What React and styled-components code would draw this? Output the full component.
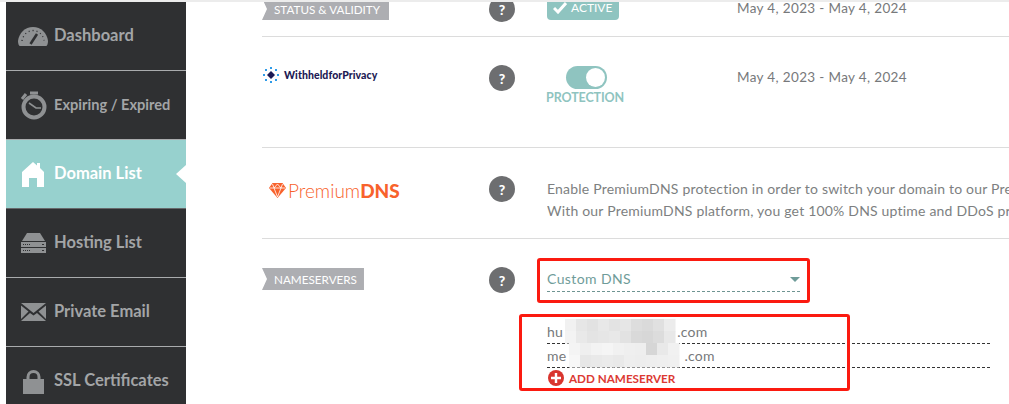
import React from "react";
import styled, { createGlobalStyle } from "styled-components";

const Global = createGlobalStyle`
  html, body { margin: 0; padding: 0; height: 404px; overflow: hidden; background: #fff; }
  body { font-family: Lato, "Open Sans", sans-serif; }
`;
const Page = styled.div`
  width: 1009px; height: 404px; overflow: hidden; display: flex; box-sizing: border-box;
  border-top: 2px solid #ececec; padding-left: 6px;
`;
const Sidebar = styled.nav`
  width: 180px; flex: none; background: #2f3032; display: flex; flex-direction: column;
`;
const NavItem = styled.div`
  height: 69px; flex: none; box-sizing: border-box; display: flex; align-items: center; position: relative;
  background: ${p => p.$active ? "#97d1ce" : "transparent"};
  color: ${p => p.$active ? "#fff" : "#a3a5a7"};
  border-bottom: 1px solid ${p => p.$active ? "#66696b" : "#a9abad"};
`;
const NavIcon = styled.span`
  width: 48px; display: flex; justify-content: center; flex: none; padding-left: 6px; box-sizing: border-box;
`;
const NavLabel = styled.span`
  font-size: ${p => p.$size || 16.5}px; font-weight: 700; white-space: nowrap;
  padding-bottom: ${p => p.$nudge ?? 2}px;
`;
const Notch = styled.span`
  position: absolute; right: 0; top: 50%; margin-top: -9px; width: 0; height: 0;
  border-style: solid; border-width: 9px 10px 9px 0; border-color: transparent #fff transparent transparent;
`;
const Main = styled.main`
  margin-left: 76px; flex: 1; min-width: 0; display: flex; flex-direction: column; overflow: hidden;
`;
const Row = styled.section`
  height: ${p => p.$h}px; flex: none; box-sizing: border-box; position: relative;
  display: grid; grid-template-columns: 227px 58px 190px 1fr; align-content: start; align-items: start;
  padding-top: ${p => p.$top}px;
  border-bottom: ${p => p.$last ? "0" : "1px solid #dcdcdc"};
`;
const Tag = styled.div`
  justify-self: start; height: 22px; margin-top: ${p => p.$mt}px; background: #adaeb2; color: #fff; font-size: 11.7px;
  display: flex; align-items: center; padding: 0 ${p => p.$pr}px ${p => p.$pb || 0}px 12px; box-sizing: border-box;
  clip-path: polygon(0 0, 100% 0, 100% 100%, 0 100%, 5px 50%);
  white-space: nowrap; line-height: 12px;
`;
const Help = styled.div`
  width: 26px; height: 26px; border-radius: 50%; background: #6d6e70; color: #fff; margin-top: ${p => p.$mt || 0}px;
  font-weight: 900; font-size: 14px; display: flex; align-items: center; justify-content: center;
`;
const Status = styled.div`
  justify-self: start; height: 18px; width: 72px; background: #8fc4c0; border-radius: 0 0 4px 4px; color: #fff;
  font-size: 12px; line-height: 12px; display: flex; align-items: center; gap: 4px; padding: 0 0 6px 6px; box-sizing: border-box;
`;
const DateText = styled.div`
  font-size: 13.5px; line-height: 12px; color: #77797b; letter-spacing: .35px; white-space: nowrap; margin-top: ${p => p.$mt || 0}px;
`;
const Brand = styled.div`
  display: flex; align-items: center; gap: 4px; color: #1d1a55; font-size: 10.5px; font-weight: 900; white-space: nowrap;
  letter-spacing: .06px; margin-top: 1px;
`;
const Toggle = styled.div`
  width: 41px; height: 23px; border-radius: 12px; background: #8fc4c0; position: relative; margin: 1px 0 0 19px;
`;
const Knob = styled.span`
  position: absolute; right: 2px; top: 2px; width: 19px; height: 19px; border-radius: 50%; background: #fff;
`;
const ProtectCol = styled.div`
  display: flex; flex-direction: column; align-items: flex-start;
`;
const Protect = styled.div`
  font-size: 12.5px; font-weight: 700; color: #8fc4c0; margin-top: 1px; margin-left: -1px; letter-spacing: -.1px;
`;
const Premium = styled.div`
  display: flex; align-items: center; gap: 2px; color: #f8622c; font-size: 19px; font-weight: 300; white-space: nowrap; margin: 3px 0 0 7px;
  b { font-weight: 900; }
`;
const Description = styled.div`
  grid-column: 3 / 5; font-size: 14px; line-height: 21.5px; color: #7d7f81; white-space: nowrap; letter-spacing: .2px;
  overflow: hidden; margin-top: 2px;
`;
const NsColumn = styled.div`
  grid-column: 3 / 5; display: flex; flex-direction: column;
`;
const SelectMark = styled.div`
  width: 273px; height: 45px; margin: -9px 0 0 -10px; border: 3px solid #fb1a10; border-radius: 3px;
  box-sizing: border-box; padding: 6px 7px 0 7px;
`;
const Select = styled.div`
  height: 25px; box-sizing: border-box; border-bottom: 1px dashed #6f9592; display: flex; align-items: center;
  justify-content: space-between; color: #6f9c99; font-size: 14px; letter-spacing: .4px; padding-bottom: 1px;
`;
const Caret = styled.span`
  width: 0; height: 0; border-style: solid; border-width: 5px 5.5px 0; border-color: #6f9c99 transparent transparent; margin-top: 1px;
`;
const NsList = styled.div`
  position: relative; width: 443px; margin-top: 17px;
`;
const NsField = styled.div`
  height: 24px; box-sizing: border-box; border-bottom: 1px dashed #333; color: #77797b; font-size: 14px;
  letter-spacing: .25px; display: flex; align-items: center; white-space: nowrap;
`;
const Gap = styled.span`
  display: inline-block; width: ${p => p.$w}px;
`;
const Smudge = styled.svg`
  position: absolute; left: 10px; top: -1px; width: 125px; height: 50px;
`;
const Annot = styled.div`
  position: absolute; left: -28px; top: -6px; width: 331px; height: 77px; box-sizing: border-box;
  border: 3px solid #fb1a10; border-radius: 3px; pointer-events: none;
`;
const Add = styled.div`
  display: flex; align-items: center; gap: 5px; color: #dc3a33; font-size: 11.7px; font-weight: 700; margin: 2px 0 0 1px;
`;

const Gauge = () => (
  <svg width="30" height="21" viewBox="0 0 30 21"><path fill="#8f9193" fillRule="evenodd" d="M15 1C7 1 1 7 0 15c0 3 1 5 2 5h26c1 0 2-2 2-5C29 7 23 1 15 1z"/>
    <path stroke="#2f3032" strokeWidth="1.3" strokeDasharray="1 3" fill="none" d="M4 15C5 9 9 5 15 4.500c6 .5 10 4 11 10"/>
    <path stroke="#2f3032" strokeWidth="2.600" fill="none" d="M12.500 18 19 8"/></svg>
);
const Timer = () => (
  <svg width="28" height="29" viewBox="0 0 28 29"><circle cx="15" cy="16" r="10.500" fill="none" stroke="#8f9193" strokeWidth="4"/>
    <path stroke="#8f9193" strokeWidth="3" d="M3 8l4-5M11 2h8"/><path stroke="#8f9193" strokeWidth="1.600" d="M10 12l7 5h5" fill="none"/></svg>
);
const Home = () => (
  <svg width="22" height="25" viewBox="0 0 22 25"><path fill="#fff" d="M11 0l4 3.500V1h3v5l4 4v15h-7v-9H7v9H0V10z"/></svg>
);
const Server = () => (
  <svg width="27" height="21" viewBox="0 0 27 21"><path fill="#8f9193" d="M7 0h13l5 8H2zM1 9h25v5H1zM1 15h25v5H1z"/>
    <path stroke="#2f3032" strokeWidth="1" strokeDasharray="1 1" d="M3 11.500h8M3 17.500h8"/><path stroke="#2f3032" d="M22 11.500h2M22 17.500h2"/></svg>
);
const Mail = () => (
  <svg width="25" height="18" viewBox="0 0 25 18"><path fill="#8f9193" d="M0 0l12.500 10L25 0zM0 2.500V16l7.500-7.500zM25 2.500V16l-7.500-7.500zM0 18l9-8 3.500 2.500L16 10l9 8z"/></svg>
);
const Lock = () => (
  <svg width="21" height="25" viewBox="0 0 21 25"><path fill="none" stroke="#8f9193" strokeWidth="3" d="M5 11V8a5.500 5.500 0 0 1 11 0v3"/><path fill="#8f9193" d="M0 10h21v15H0z"/></svg>
);
const Check = () => (
  <svg width="14" height="12" viewBox="0 0 14 12"><path fill="none" stroke="#fff" strokeWidth="3" d="M1 6l4 4 8-9"/></svg>
);
const WhoisLogo = () => (
  <svg width="18" height="18" viewBox="0 0 18 18"><path fill="#1d1a55" d="M9 5l4 4-4 4-4-4z"/>
    <g fill="#2f9be8"><rect x="8" y="1" width="2" height="2"/><rect x="8" y="15" width="2" height="2"/><rect x="1" y="8" width="2" height="2"/><rect x="15" y="8" width="2" height="2"/><rect x="3" y="3" width="2" height="2"/><rect x="13" y="3" width="2" height="2"/><rect x="3" y="13" width="2" height="2"/><rect x="13" y="13" width="2" height="2"/></g></svg>
);
const Gem = () => (
  <svg width="17" height="15" viewBox="0 0 17 15"><path fill="#f8622c" d="M3.500 0h10L17 5l-8.500 10L0 5z"/><path stroke="#fff" strokeWidth=".8" fill="none" d="M1 5h15M5 5l3.500 9L12 5M3.500 1L5 5l3.500-4L12 5l1.500-4"/></svg>
);
const Plus = () => (
  <svg width="16" height="16" viewBox="0 0 16 16"><circle cx="8" cy="8" r="8" fill="#d9352e"/><path stroke="#fff" strokeWidth="2.400" d="M8 3v10M3 8h10"/></svg>
);

const nav = [
  { label: "Dashboard", icon: <Gauge /> },
  { label: "Expiring / Expired", size: 14.6, nudge: 1, icon: <Timer /> },
  { label: "Domain List", active: true, icon: <Home /> },
  { label: "Hosting List", icon: <Server /> },
  { label: "Private Email", icon: <Mail /> },
  { label: "SSL Certificates", icon: <Lock /> },
];
const shades = [
  ["#f1f1f1","#e6e6e6","#e2e2e2","#e8e8e8","#e3e3e3","#e6e6e6","#dddddd","#dadada","#e0e0e0","#ececec"],
  ["#f3f3f3","#e9e9e9","#e4e4e4","#e6e6e6","#e8e8e8","#e2e2e2","#d9d9d9","#d7d7d7","#dcdcdc","#e8e8e8"],
  ["#f4f4f4","#efefef","#f3f3f3","#f5f5f5","#f1f1f1","#efefef","#eeeeee","#d6d6d6","#e9e9e9","#f1f1f1"],
  ["#f7f7f7","#e7e7e7","#e9e9e9","#ebebeb","#e9e9e9","#eeeeee","#ededed","#eeeeee","#efefef","#f0f0f0"],
];
const offsets = [8, 8, 12, 12];

export default function App() {
  return (
    <Page>
      <Global />
      <Sidebar>
        {nav.map(n => (
          <NavItem key={n.label} $active={n.active}>
            <NavIcon>{n.icon}</NavIcon>
            <NavLabel $size={n.size} $nudge={n.nudge}>{n.label}</NavLabel>
            {n.active && <Notch />}
          </NavItem>
        ))}
      </Sidebar>
      <Main>
        <Row $h={35} $top={0}>
          <Tag $mt={-4} $pr={9} $pb={1}>STATUS &amp; VALIDITY</Tag>
          <Help $mt={-6}>?</Help>
          <Status><Check />ACTIVE</Status>
          <DateText>May 4, 2023 - May 4, 2024</DateText>
        </Row>
        <Row $h={111} $top={28}>
          <Brand><WhoisLogo />WithheldforPrivacy</Brand>
          <Help>?</Help>
          <ProtectCol><Toggle><Knob /></Toggle><Protect>PROTECTION</Protect></ProtectCol>
          <DateText $mt={6}>May 4, 2023 - May 4, 2024</DateText>
        </Row>
        <Row $h={91} $top={28}>
          <Premium><Gem /><span>Premium<b>DNS</b></span></Premium>
          <Help>?</Help>
          <Description>
            Enable PremiumDNS protection in order to switch your domain to our PremiumDNS platform.<br />
            With our PremiumDNS platform, you get 100% DNS uptime and DDoS protection for your domain.
          </Description>
        </Row>
        <Row $h={165} $top={28} $last>
          <Tag $mt={1} $pr={7}>NAMESERVERS</Tag>
          <Help>?</Help>
          <NsColumn>
            <SelectMark>
              <Select>Custom DNS<Caret /></Select>
            </SelectMark>
            <NsList>
              <NsField>hu<Gap $w={114} />.com</NsField>
              <NsField>me<Gap $w={118} />.com</NsField>
              <Add><Plus />ADD NAMESERVER</Add>
              <Smudge viewBox="0 0 125 50">
                {shades.map((row, r) => row.map((c, i) => (
                  <rect key={r + "-" + i} x={offsets[r] + i * 11} y={r * 12} width="11.500" height="12.500" fill={c} />
                )))}
              </Smudge>
              <Annot />
            </NsList>
          </NsColumn>
        </Row>
      </Main>
    </Page>
  );
}
